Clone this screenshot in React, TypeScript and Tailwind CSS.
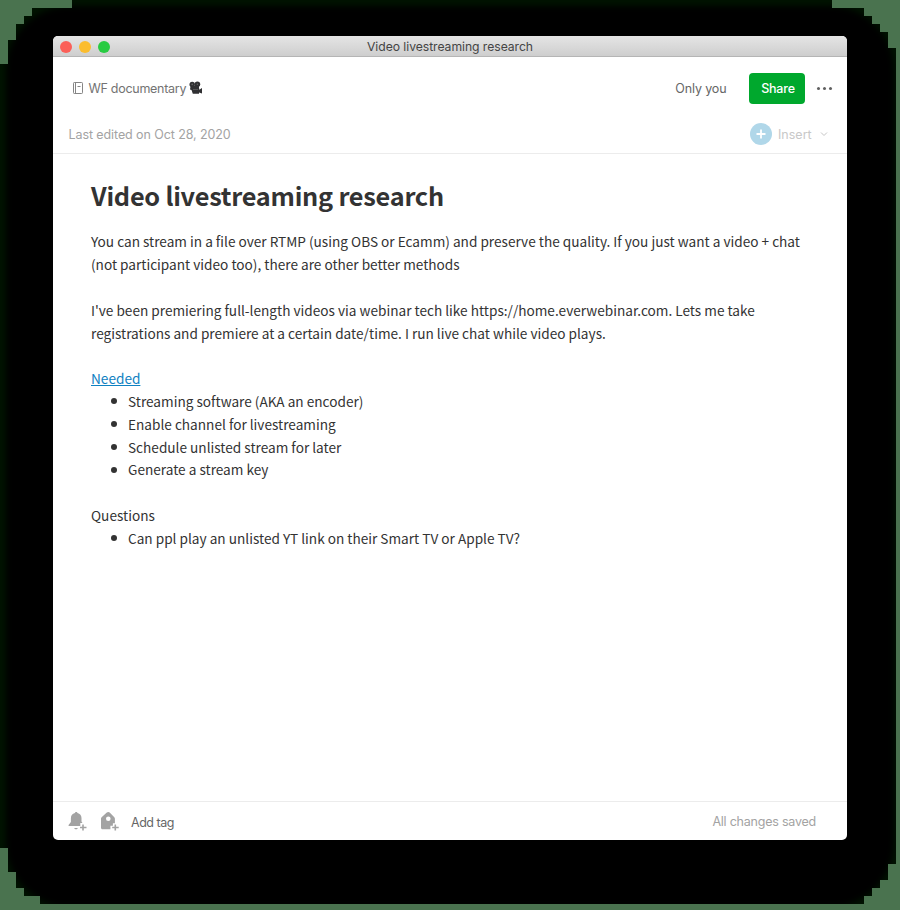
const BODY = "font-['Noto_Sans_CJK_SC','Source_Sans_Pro',sans-serif]";

function Backdrop() {
  return (
    <svg className="absolute inset-0" width="900" height="910" viewBox="0 0 900 910" aria-hidden="true">
      <defs>
        <filter id="soft" x="-5%" y="-5%" width="110%" height="110%">
          <feGaussianBlur stdDeviation="3" />
        </filter>
        <clipPath id="steps">
          <path d="M72 0H832V8H864V16H872V24H880V32H888V48H896V864H888V880H880V888H872V896H864V904H40V896H24V888H16V872H8V848H0V64H8V40H16V24H24V16H32V8H72Z" />
        </clipPath>
      </defs>
      <rect width="900" height="910" fill="#4a734f" />
      <g clipPath="url(#steps)">
        <rect width="900" height="910" fill="#001300" />
        <rect x="6" y="6" width="888" height="901" rx="64" fill="#000" filter="url(#soft)" />
      </g>
    </svg>
  );
}

function Notebook() {
  return (
    <svg width="12" height="13" viewBox="0 0 12 13" fill="none" stroke="#858585" strokeWidth="1" aria-hidden="true">
      <rect x="1.500" y=".5" width="9" height="11" rx=".8" />
      <path d="M3.500 .5v11M5.500 4.500h3" />
    </svg>
  );
}

function Camera() {
  return (
    <svg width="14" height="14" viewBox="0 0 14 14" fill="#303033" aria-hidden="true">
      <circle cx="3.2" cy="3.4" r="2.7" />
      <circle cx="8.4" cy="3.2" r="2.8" />
      <path d="M1.5 5.2 9.8 4.5 10.3 8.7 13 7v5.5l-3-1v1.2H3.8L2.5 9 1 8.5Z" />
      <circle cx="3.2" cy="3.4" r=".8" fill="#666" />
      <circle cx="8.4" cy="3.2" r=".8" fill="#666" />
      <path d="M4 8.5h5" stroke="#666" strokeWidth=".7" />
    </svg>
  );
}

function BellPlus() {
  return (
    <svg width="20" height="20" viewBox="0 0 20 20" fill="#a3a3a3" aria-hidden="true">
      <path d="M8.2 1c.8 0 1.2.5 1.3 1.1C12 2.7 13.5 4.600 13.500 7v3.500l1 1.600h-2.200v2.900H.6v-1L2.900 11V7c0-2.400 1.500-4.300 4-4.900C7 1.500 7.400 1 8.200 1Z" />
      <path d="M6.200 17h3.600c-.3 1.700-3.300 1.700-3.600 0Z" />
      <path d="M15 13.500v6M12 16.500h6.500" stroke="#a3a3a3" strokeWidth="1.600" />
    </svg>
  );
}

function TagPlus() {
  return (
    <svg width="20" height="20" viewBox="0 0 20 20" fill="#a3a3a3" aria-hidden="true">
      <path fillRule="evenodd" d="M8.300 1c.6 0 1 .2 1.400.6l4.600 4.700c.4.400.6.900.6 1.400v4.600h-2v2.500h-2.500v3.500H2.500c-.9 0-1.500-.6-1.500-1.500V7.700c0-.5.2-1 .6-1.400l5.200-4.700c.4-.4.900-.6 1.500-.6ZM8.300 5.500a2.300 2.300 0 1 0 0 4.600 2.300 2.300 0 0 0 0-4.600Z" />
      <path d="M15.300 13.500v6M12.200 16.500h6.500" stroke="#a3a3a3" strokeWidth="1.600" />
    </svg>
  );
}

function Line({ children }: { children?: React.ReactNode }) {
  return <div className="h-[22.8px] whitespace-nowrap">{children}</div>;
}

function Item({ children }: { children: React.ReactNode }) {
  return (
    <li className="flex h-[22.8px] items-center whitespace-nowrap">
      <span className="mr-[11px] ml-5 size-1.5 rounded-full bg-[#333]" />
      {children}
    </li>
  );
}

export default function App() {
  return (
    <div className="relative h-[910px] w-[900px] overflow-hidden">
      <Backdrop />
      <div className="relative px-[53px] pt-9">
        <main className="flex h-[804px] w-[794px] flex-col overflow-hidden rounded-[5px] bg-white font-['Inter','Liberation_Sans',sans-serif] text-[12.500px]">
          <header className="grid h-[21px] shrink-0 grid-cols-[1fr_auto_1fr] items-center border-b border-[#b5b5b5] bg-linear-to-b from-[#e5e5e5] to-[#cecece]">
            <div className="flex gap-[7px] pl-[7px]">
              <span className="size-3 rounded-full bg-[#fb5f58]" />
              <span className="size-3 rounded-full bg-[#fbbd2e]" />
              <span className="size-3 rounded-full bg-[#28cb42]" />
            </div>
            <h2 className="pt-px text-[12.200px] leading-5 tracking-[-0.05px] text-[#454545]">Video livestreaming research</h2>
          </header>

          <section className="h-[97px] shrink-0 border-b border-[#ececec]">
            <div className="flex h-[62px] items-center pr-[15.500px] pl-[19px]">
              <Notebook />
              <span className="ml-[4.500px] w-[98px] pt-[3px] tracking-[-0.280px] whitespace-nowrap text-[#737373]">WF documentary</span>
              <span className="ml-[2.500px]"><Camera /></span>
              <span className="mr-[22.500px] ml-auto pt-0.5 tracking-[-0.120px] text-[#666]">Only you</span>
              <button className="h-[31px] w-14 rounded-[4px] bg-[#00a82d] pt-0.5 pl-0.5 font-medium tracking-[-0.200px] text-white">Share</button>
              <span className="ml-[11.500px] flex gap-[3px]">
                <i className="size-[3px] rounded-full bg-[#606060]" />
                <i className="size-[3px] rounded-full bg-[#606060]" />
                <i className="size-[3px] rounded-full bg-[#606060]" />
              </span>
            </div>
            <div className="flex h-[30px] items-center pr-[19px] pl-[15.500px]">
              <span className="pt-0.5 tracking-[-0.090px] text-[#a3a3a3]">Last edited on Oct 28, 2020</span>
              <svg className="ml-auto" width="22" height="22" viewBox="0 0 22 22" aria-hidden="true">
                <circle cx="11" cy="11" r="11" fill="#b0d7e9" />
                <path d="M11 6.500v9M6.500 11h9" stroke="#fff" strokeWidth="1.800" />
              </svg>
              <span className="ml-[6px] w-[34px] pt-0.5 text-[#c8c8c8]">Insert</span>
              <svg className="ml-[8px]" width="8" height="6" viewBox="0 0 8 6" fill="none" stroke="#c4c4c4" aria-hidden="true">
                <path d="m1 1.500 3 3 3-3" />
              </svg>
            </div>
          </section>

          <article className={`${BODY} flex-1 px-[38px] pt-[21px] text-[13.630px] leading-[22.8px] text-[#333]`}>
            <h1 className="mb-[15.400px] h-10 text-[25.300px] leading-10 font-bold tracking-[-0.250px] whitespace-nowrap">Video livestreaming research</h1>
            <Line>You can stream in a file over RTMP (using OBS or Ecamm) and preserve the quality. If you just want a video + chat</Line>
            <Line>(not participant video too), there are other better methods</Line>
            <Line />
            <Line>I've been premiering full-length videos via webinar tech like https://home.everwebinar.com. Lets me take</Line>
            <Line>registrations and premiere at a certain date/time. I run live chat while video plays.</Line>
            <Line />
            <Line><a className="text-[#0f81c2] underline">Needed</a></Line>
            <ul>
              <Item>Streaming software (AKA an encoder)</Item>
              <Item>Enable channel for livestreaming</Item>
              <Item>Schedule unlisted stream for later</Item>
              <Item>Generate a stream key</Item>
            </ul>
            <Line />
            <Line>Questions</Line>
            <ul>
              <Item>Can ppl play an unlisted YT link on their Smart TV or Apple TV?</Item>
            </ul>
          </article>

          <footer className="flex h-[39px] shrink-0 items-center border-t border-[#ececec] pr-[31px] pl-[15px]">
            <BellPlus />
            <span className="ml-[12px]"><TagPlus /></span>
            <span className="ml-[11px] pt-[4px] tracking-[-0.480px] text-[#666]">Add tag</span>
            <span className="ml-auto pt-0.5 tracking-[-0.220px] text-[#a3a3a3]">All changes saved</span>
          </footer>
        </main>
      </div>
    </div>
  );
}
